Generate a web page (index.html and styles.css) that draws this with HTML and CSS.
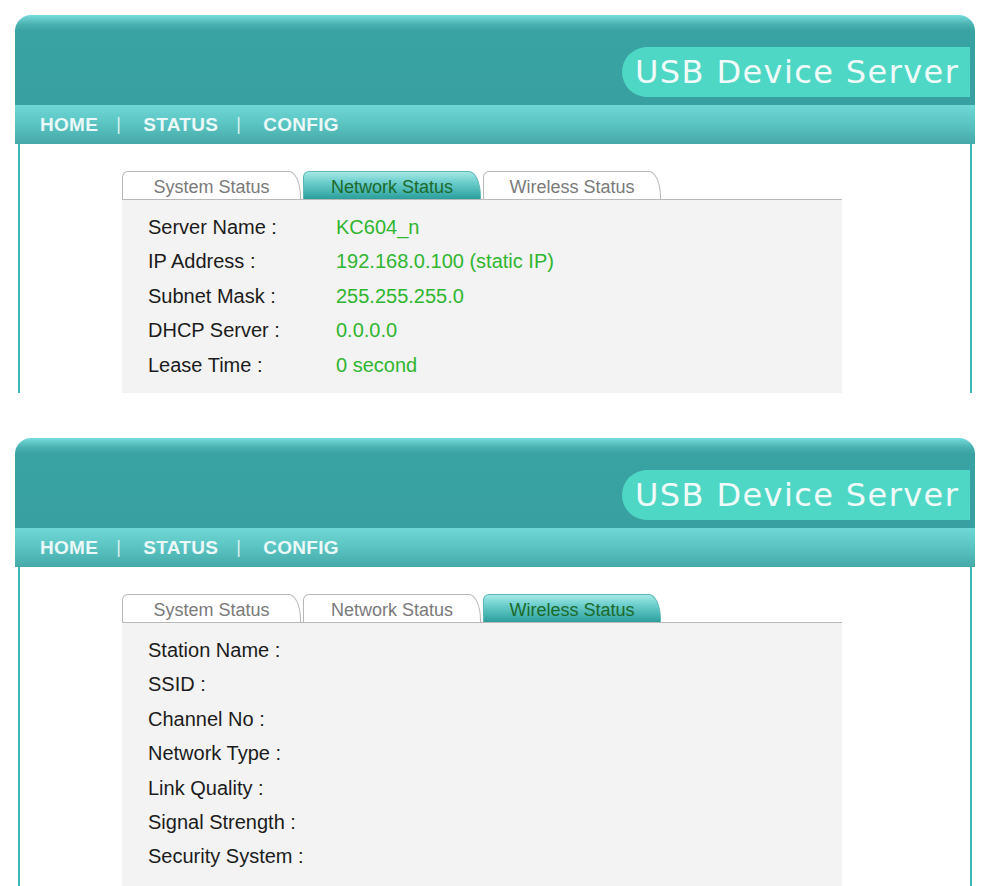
FILE: index.html
```html
<!DOCTYPE html>
<html>
<head>
<meta charset="utf-8">
<link rel="stylesheet" href="styles.css">
</head>
<body>
<div class="shot shot-first">
  <div class="header">
    <div class="logo">USB Device Server</div>
  </div>
  <div class="nav">
    <span class="nav-item">HOME</span><span class="sep">|</span>
    <span class="nav-item">STATUS</span><span class="sep">|</span>
    <span class="nav-item">CONFIG</span>
  </div>
  <div class="body">
    <div class="tabs">
      <div class="tab">System Status</div>
      <div class="tab active">Network Status</div>
      <div class="tab">Wireless Status</div>
    </div>
    <div class="panel">
      <div class="row"><span class="label">Server Name :</span><span class="value">KC604_n</span></div>
      <div class="row"><span class="label">IP Address :</span><span class="value">192.168.0.100 (static IP)</span></div>
      <div class="row"><span class="label">Subnet Mask :</span><span class="value">255.255.255.0</span></div>
      <div class="row"><span class="label">DHCP Server :</span><span class="value">0.0.0.0</span></div>
      <div class="row"><span class="label">Lease Time :</span><span class="value">0 second</span></div>
    </div>
  </div>
</div>

<div class="shot shot-second">
  <div class="header">
    <div class="logo">USB Device Server</div>
  </div>
  <div class="nav">
    <span class="nav-item">HOME</span><span class="sep">|</span>
    <span class="nav-item">STATUS</span><span class="sep">|</span>
    <span class="nav-item">CONFIG</span>
  </div>
  <div class="body">
    <div class="tabs">
      <div class="tab">System Status</div>
      <div class="tab">Network Status</div>
      <div class="tab active">Wireless Status</div>
    </div>
    <div class="panel">
      <div class="row"><span class="label">Station Name :</span></div>
      <div class="row"><span class="label">SSID :</span></div>
      <div class="row"><span class="label">Channel No :</span></div>
      <div class="row"><span class="label">Network Type :</span></div>
      <div class="row"><span class="label">Link Quality :</span></div>
      <div class="row"><span class="label">Signal Strength :</span></div>
      <div class="row"><span class="label">Security System :</span></div>
    </div>
  </div>
</div>
</body>
</html>
```

FILE: styles.css
```css
html, body {
  margin: 0;
  padding: 0;
  background: #ffffff;
}

body {
  font-family: "Liberation Sans", Arial, sans-serif;
}

.shot {
  width: 960px;
  margin-left: 15px;
  overflow: hidden;
}

.shot-first {
  margin-top: 15px;
  height: 378px;
}

.shot-second {
  margin-top: 45px;
  height: 448px;
}

.header {
  height: 90px;
  border-radius: 16px 16px 0 0;
  background: linear-gradient(to bottom, #78dcdc 0px, #4cb2b2 9px, #39a2a2 16px, #38a0a0 100%);
  display: flex;
  justify-content: flex-end;
  align-items: flex-start;
  padding: 32px 5px 0 0;
  box-sizing: border-box;
}

.logo {
  width: 348px;
  height: 50px;
  box-sizing: border-box;
  padding-left: 13px;
  border-radius: 25px 0 0 25px;
  background: #4fd7c5;
  color: #f0fbf9;
  font-family: "DejaVu Sans", sans-serif;
  font-size: 32px;
  letter-spacing: 1.4px;
  line-height: 50px;
  white-space: nowrap;
  overflow: hidden;
}

.nav {
  height: 39px;
  background: linear-gradient(to bottom, #6fd7d6 0%, #5cc6c5 45%, #45a9a8 100%);
  display: flex;
  align-items: center;
  padding-left: 25px;
  color: #eaf8f7;
  font-size: 19px;
  font-weight: bold;
  letter-spacing: 0.3px;
}

.sep {
  font-weight: normal;
  font-size: 18px;
  color: #d8f2f1;
  margin: 0 22px 0 18px;
}

.body {
  margin: 0 3px;
  border-left: 2px solid #3cb6b6;
  border-right: 2px solid #3cb6b6;
  background: #ffffff;
  padding: 27px 0 0 102px;
  height: 600px;
}

.tabs {
  width: 720px;
  height: 28px;
  display: flex;
  gap: 2px;
  border-bottom: 1px solid #b9b9b9;
}

.tab {
  width: 178px;
  height: 28px;
  box-sizing: border-box;
  border: 1px solid #b7b7b7;
  border-bottom: none;
  border-radius: 6px 12px 0 0 / 6px 26px 0 0;
  background: #ffffff;
  color: #7a7a7a;
  font-size: 18px;
  line-height: 30px;
  text-align: center;
}

.tab:first-child {
  width: 179px;
}

.tab.active {
  background: linear-gradient(to bottom, #a6e8e6 0%, #6fd0ce 35%, #44b3b1 75%, #2c9e9c 100%);
  border-color: #5cb8b6;
  color: #1c6a2a;
}

.panel {
  width: 720px;
  background: #f3f3f3;
  padding: 10px 0 40px 26px;
  box-sizing: border-box;
}

.row {
  display: grid;
  grid-template-columns: 188px auto;
  height: 34.4px;
  line-height: 34.4px;
  font-size: 20px;
  white-space: nowrap;
}

.label {
  color: #1c1c1c;
}

.value {
  color: #30b630;
}
```
